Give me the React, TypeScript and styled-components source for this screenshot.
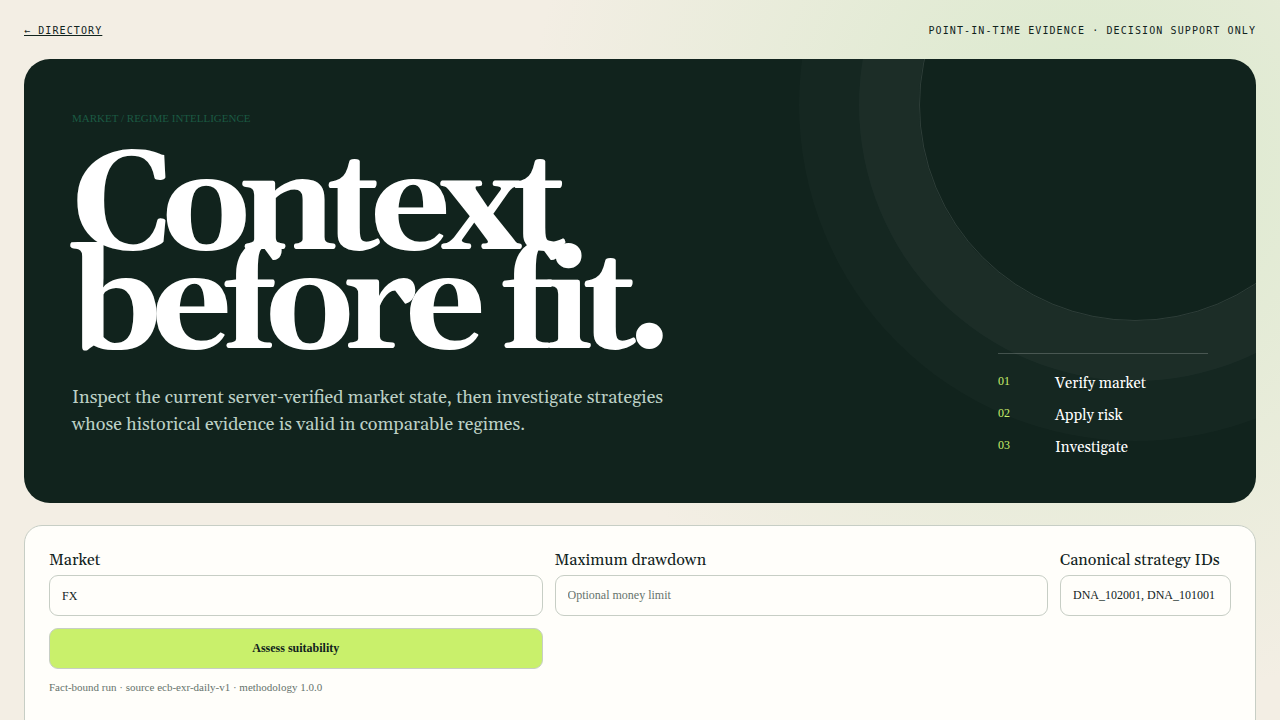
import React from "react";
import styled, { createGlobalStyle } from "styled-components";

const GlobalStyle = createGlobalStyle`
  *, *::before, *::after { box-sizing: border-box; }
  body {
    margin: 0;
    min-height: 100vh;
    color: #11231d;
    font-family: Georgia, Gelasio, "Liberation Serif", serif;
    font-size: 16px;
    background: radial-gradient(circle 560px at 85% 150px, #d9e9cc 0, transparent 100%), #f3eee4;
  }
`;

const Page = styled.div`
  padding: 0 24px 48px;
`;

const TopBar = styled.header`
  display: flex;
  align-items: center;
  justify-content: space-between;
  height: 59px;
  padding-top: 2px;
  font-family: "DejaVu Sans Mono", monospace;
  font-size: 10px;
  letter-spacing: 0.11em;
  text-transform: uppercase;
`;

const BackLink = styled.a`
  color: inherit;
`;

const Hero = styled.section`
  position: relative;
  overflow: hidden;
  display: grid;
  grid-template-columns: minmax(0, 1fr) 210px;
  gap: 48px;
  align-items: end;
  padding: 48px;
  border-radius: 26px;
  color: #fff;
  background: #11231d;

  &::after {
    content: "";
    position: absolute;
    top: -170px;
    right: -95px;
    width: 432px;
    height: 432px;
    border: 1px solid rgba(255, 255, 255, 0.12);
    border-radius: 50%;
    box-shadow: 0 0 0 60px rgba(255, 255, 255, 0.03), 0 0 0 120px rgba(255, 255, 255, 0.02);
  }
`;

const Eyebrow = styled.p`
  margin: 0 0 30px;
  color: #1b5a43;
  font-family: "Liberation Serif", serif;
  font-size: 11px;
  line-height: 22px;
  text-transform: uppercase;
`;

const Title = styled.h1`
  margin: 0;
  font-size: 11vw;
  line-height: 0.7;
  letter-spacing: -0.08em;
`;

const Lede = styled.p`
  max-width: 620px;
  margin: 28px 0 17px;
  color: #bcd0c5;
  font-size: 18px;
  line-height: 27px;
`;

const Steps = styled.ol`
  position: relative;
  z-index: 1;
  display: grid;
  gap: 17px;
  margin: 0;
  padding: 22px 0 0;
  list-style: none;
  border-top: 1px solid rgba(255, 255, 255, 0.2);
`;

const Step = styled.li`
  display: grid;
  grid-template-columns: 45px 1fr;
  gap: 12px;
  font-size: 15px;
  line-height: 15px;
`;

const StepNumber = styled.span`
  color: #c9f06b;
  font-family: "Liberation Serif", serif;
  font-size: 12px;
  line-height: 10px;
`;

const Panel = styled.section`
  margin-top: 22px;
  padding: 24px 24px 48px;
  border: 1px solid #c7cec5;
  border-radius: 18px;
  background: #fffefa;
`;

const Form = styled.form`
  display: grid;
  grid-template-columns: 1fr 1fr 171px;
  gap: 12px;
`;

const Field = styled.label`
  display: grid;
  gap: 5px;
  line-height: 20px;
`;

const control = `
  width: 100%;
  height: 41px;
  padding: 0 12px;
  border: 1px solid #c7cec5;
  border-radius: 9px;
  color: #11231d;
  font-family: "Liberation Serif", serif;
  font-size: 12px;
`;

const Select = styled.select`
  ${control}
  appearance: none;
  background: #fffefa;
`;

const Input = styled.input`
  ${control}
  background: #fffefa;
  &::placeholder { color: #66736c; }
`;

const Submit = styled.button`
  ${control}
  background: #c9f06b;
  font-weight: 700;
`;

const Note = styled.p`
  margin: 12px 0 0;
  color: #66736c;
  font-family: "Liberation Serif", serif;
  font-size: 11px;
  line-height: 12px;
`;

const steps = ["Verify market", "Apply risk", "Investigate"];

export default function App() {
  return (
    <Page>
      <GlobalStyle />
      <TopBar>
        <BackLink href="#directory">← Directory</BackLink>
        <span>Point-in-time evidence · Decision support only</span>
      </TopBar>
      <main>
        <Hero>
          <div>
            <Eyebrow>Market / Regime intelligence</Eyebrow>
            <Title>
              Context
              <br />
              before fit.
            </Title>
            <Lede>
              Inspect the current server-verified market state, then investigate strategies whose
              historical evidence is valid in comparable regimes.
            </Lede>
          </div>
          <Steps>
            {steps.map((step, index) => (
              <Step key={step}>
                <StepNumber>0{index + 1}</StepNumber>
                {step}
              </Step>
            ))}
          </Steps>
        </Hero>
        <Panel>
          <Form onSubmit={(event) => event.preventDefault()}>
            <Field>
              Market
              <Select defaultValue="FX">
                <option>FX</option>
              </Select>
            </Field>
            <Field>
              Maximum drawdown
              <Input placeholder="Optional money limit" />
            </Field>
            <Field>
              Canonical strategy IDs
              <Input defaultValue="DNA_102001, DNA_101001" />
            </Field>
            <Submit type="submit">Assess suitability</Submit>
          </Form>
          <Note>Fact-bound run · source ecb-exr-daily-v1 · methodology 1.0.0</Note>
        </Panel>
      </main>
    </Page>
  );
}
